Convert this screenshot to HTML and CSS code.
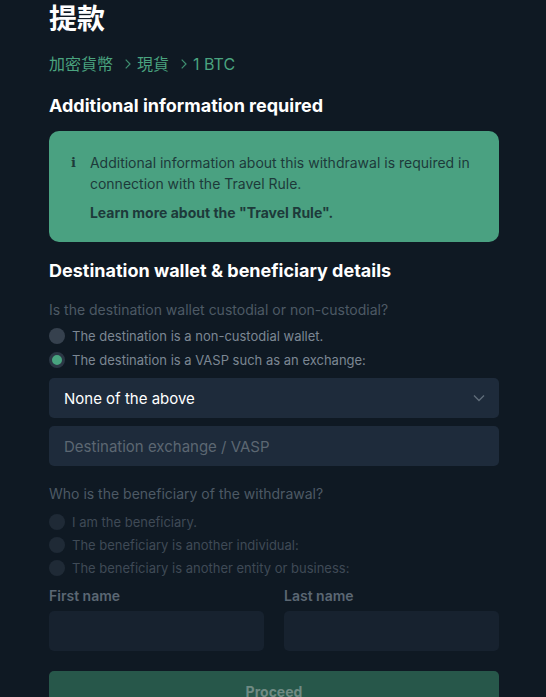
FILE: index.html
```html
<!DOCTYPE html>
<html>
<head>
  <meta charset="utf-8">
  <link rel="stylesheet" href="styles.css">
</head>
<body>

  <div class="page">
    <h1 class="title">提款</h1>

    <div class="crumbs">
      <span>加密貨幣</span>
      <svg class="sep" width="6" height="10" viewBox="0 0 6 10"><path d="M0.7 0.7 L5 5 L0.7 9.3" fill="none" stroke="#3f8f70" stroke-width="1.2"/></svg>
      <span>現貨</span>
      <svg class="sep" width="6" height="10" viewBox="0 0 6 10"><path d="M0.7 0.7 L5 5 L0.7 9.3" fill="none" stroke="#3f8f70" stroke-width="1.2"/></svg>
      <span>1 BTC</span>
    </div>

    <h2 class="section-title">Additional information required</h2>

    <div class="notice">
      <span class="notice-icon">i</span>
      <div class="notice-body">
        <p>Additional information about this withdrawal is required in connection with the Travel Rule.</p>
        <p class="notice-link">Learn more about the "Travel Rule".</p>
      </div>
    </div>

    <h2 class="section-title second">Destination wallet &amp; beneficiary details</h2>

    <div class="question">Is the destination wallet custodial or non-custodial?</div>
    <label class="radio">
      <span class="dot"></span>
      The destination is a non-custodial wallet.
    </label>
    <label class="radio">
      <span class="dot checked"></span>
      The destination is a VASP such as an exchange:
    </label>

    <div class="select">
      <span>None of the above</span>
      <svg width="12" height="8" viewBox="0 0 12 8">
        <path d="M1 1.5 L6 6.5 L11 1.5" fill="none" stroke="#5f6c79" stroke-width="1.4"/>
      </svg>
    </div>
    <div class="field">Destination exchange / VASP</div>

    <div class="question second">Who is the beneficiary of the withdrawal?</div>
    <div class="radio-group disabled">
      <label class="radio"><span class="dot"></span>I am the beneficiary.</label>
      <label class="radio"><span class="dot"></span>The beneficiary is another individual:</label>
      <label class="radio"><span class="dot"></span>The beneficiary is another entity or business:</label>
    </div>

    <div class="names">
      <div class="name-col">
        <div class="name-label">First name</div>
        <div class="name-input"></div>
      </div>
      <div class="name-col">
        <div class="name-label">Last name</div>
        <div class="name-input"></div>
      </div>
    </div>

    <button class="proceed">Proceed</button>
  </div>

</body>
</html>
```

FILE: styles.css
```css
body {
  margin: 0;
  background-color: #0f1923;
  font-family: Inter, "Noto Sans CJK TC", sans-serif;
  color: #ffffff;
  overflow: hidden;
}

.page {
  width: 450px;
  padding: 0 47px 0 49px;
}

.title {
  margin: 0;
  padding-top: 1px;
  font-size: 28px;
  line-height: 36px;
  font-weight: 700;
}

.crumbs {
  margin-top: 15px;
  display: flex;
  align-items: center;
  color: #4aa37f;
  font-size: 16px;
  line-height: 24px;
}

.crumbs .sep {
  margin: 0 6px 0 12px;
}

.section-title {
  margin: 18px 0 0;
  font-size: 18px;
  line-height: 24px;
  font-weight: 700;
}

.section-title.second {
  margin-top: 17px;
}

.notice {
  margin-top: 13px;
  background: #4aa181;
  border-radius: 10px;
  padding: 21px 24px 19px 22px;
  display: flex;
  gap: 14px;
  color: #1d3a3a;
  font-size: 14px;
  line-height: 21px;
}

.notice-icon {
  width: 6px;
  font-family: "DejaVu Serif", serif;
  font-weight: 700;
  font-size: 13px;
}

.notice-body p {
  margin: 0;
}

.notice .notice-link {
  margin-top: 8px;
  font-weight: 700;
}

.question {
  margin-top: 17px;
  color: #4d5965;
  font-size: 14px;
  line-height: 20px;
}

.question.second {
  margin-top: 18px;
}

.radio {
  display: flex;
  align-items: center;
  gap: 7px;
  margin-top: 4px;
  height: 20px;
  color: #7c8793;
  font-size: 13px;
}

.question + .radio {
  margin-top: 6px;
}

.dot {
  width: 16px;
  height: 16px;
  border-radius: 50%;
  background: #36414e;
  box-sizing: border-box;
  flex-shrink: 0;
}

.dot.checked {
  background: #48a47f;
  border: 3px solid #2b3745;
}

.radio-group {
  margin-top: 8px;
}

.radio-group .radio {
  margin-top: 3px;
  color: #3f4a56;
}

.radio-group .radio:first-child {
  margin-top: 0;
}

.radio-group .dot {
  background: #1f2a36;
}

.select,
.field {
  height: 40px;
  border-radius: 5px;
  background: #1e2b3b;
  box-sizing: border-box;
  padding: 0 14px 0 15px;
  display: flex;
  align-items: center;
  font-size: 15px;
}

.select {
  margin-top: 8px;
  justify-content: space-between;
}

.field {
  margin-top: 8px;
  color: #5c6772;
}

.names {
  margin-top: 8px;
  display: flex;
  gap: 20px;
}

.name-col {
  flex: 1;
}

.name-label {
  color: #5b6773;
  font-size: 14px;
  font-weight: 600;
  line-height: 20px;
}

.name-input {
  margin-top: 5px;
  height: 40px;
  border-radius: 5px;
  background: #17222f;
}

.proceed {
  margin-top: 20px;
  width: 100%;
  height: 40px;
  border: none;
  border-radius: 5px;
  background: #27574a;
  color: #6f8a83;
  font-family: Inter, sans-serif;
  font-size: 14px;
  font-weight: 700;
}
```
